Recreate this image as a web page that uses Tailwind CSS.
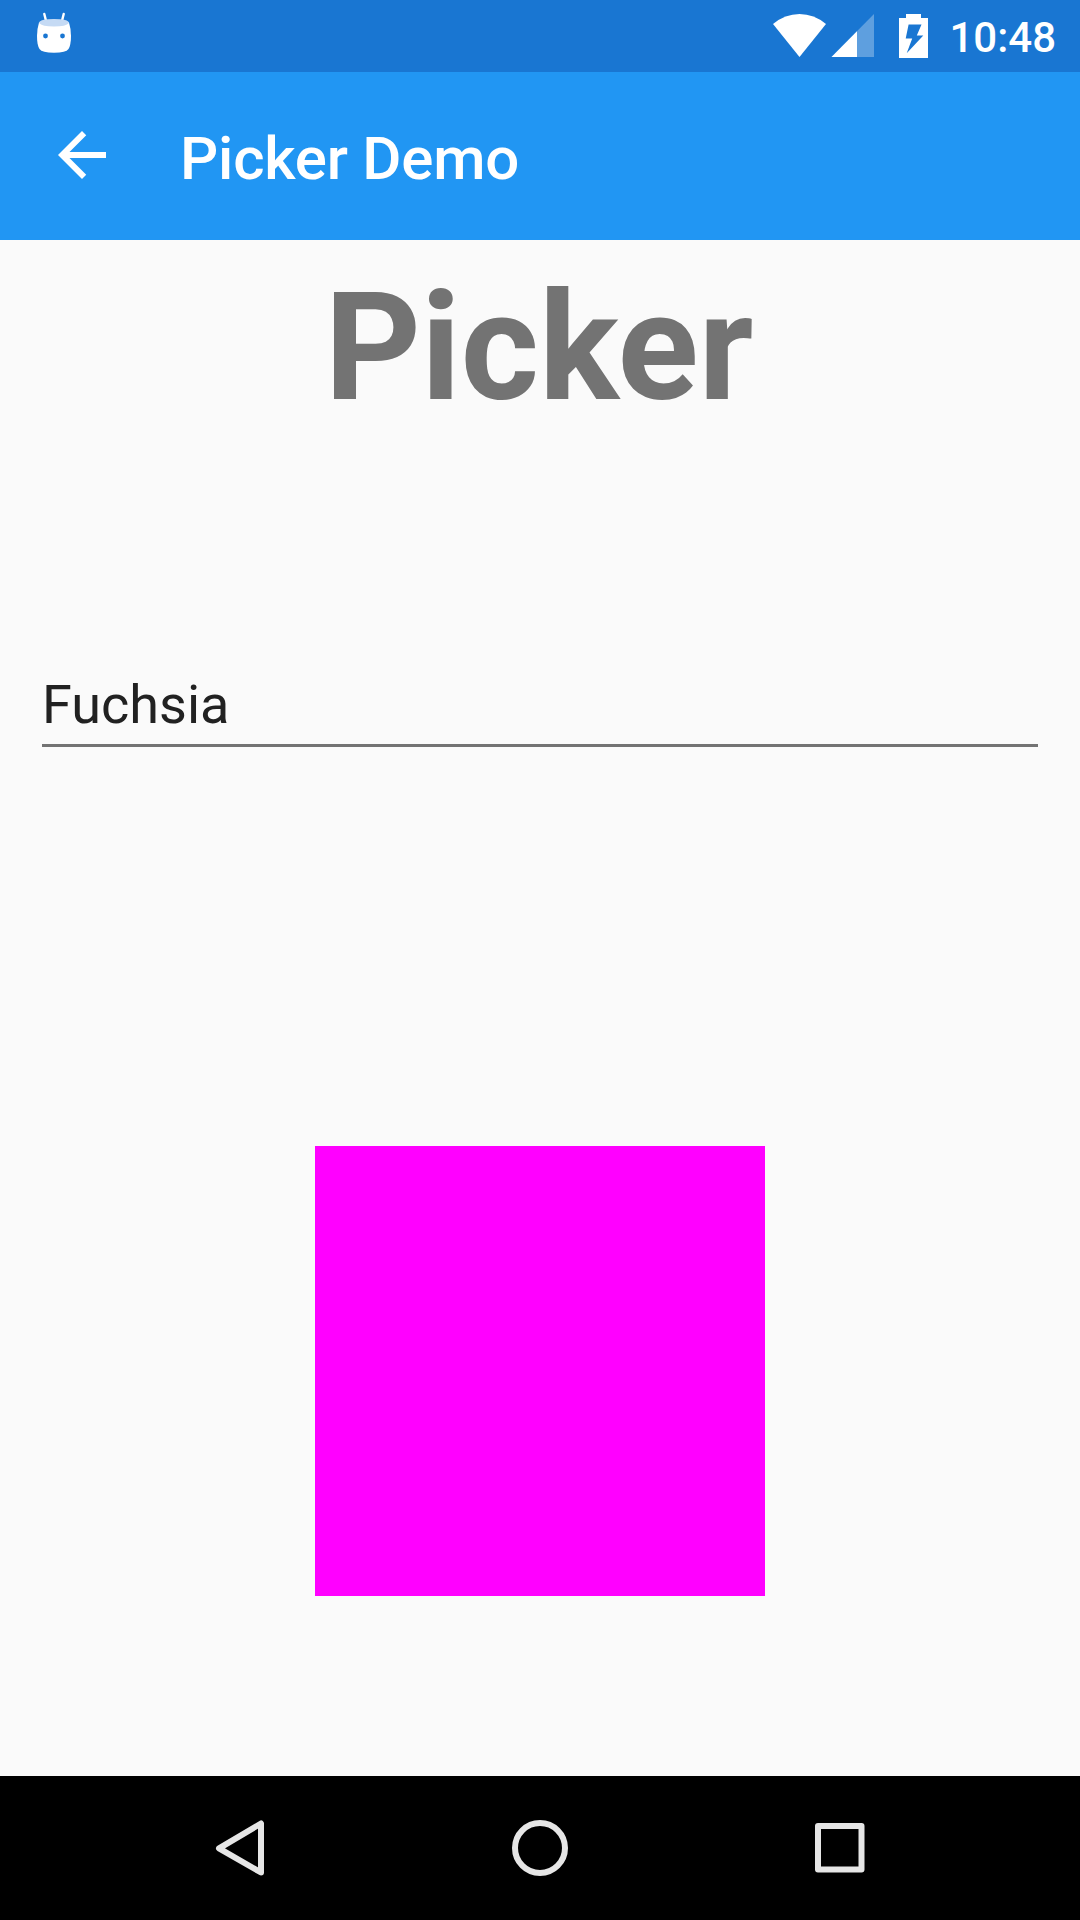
<!DOCTYPE html>
<html lang="en">
<head>
<meta charset="utf-8">
<title>Picker Demo</title>
<script src="https://cdn.jsdelivr.net/npm/@tailwindcss/browser@4"></script>
</head>
<body class="flex h-[1920px] w-[1080px] flex-col overflow-hidden bg-[#fafafa] font-['Roboto',sans-serif]">
  <div class="flex h-[72px] shrink-0 items-start justify-between bg-[#1976d2] text-white">
    <svg class="ml-[30px] h-[72px] w-12" viewBox="30 0 48 72" fill="none">
      <path d="M44.3 14l2 8M63.7 14l-2 8" stroke="#fff" stroke-width="2.4" stroke-linecap="round"/>
      <path d="M39 22.500Q54 17 69 22.500Q71 29 71 36Q71 45 68.500 49Q66 52.800 54 52.800Q42 52.800 39.500 49Q37 45 37 36Q37 29 39 22.500Z" fill="#fff"/>
      <path d="M39 23Q39.500 19 54 19Q68.500 19 69 23Q66 26.500 54 26.500Q42 26.500 39 23Z" fill="#c5daf4"/>
      <circle cx="45.500" cy="36" r="2.400" fill="#1976d2"/><circle cx="62.500" cy="36" r="2.400" fill="#1976d2"/>
    </svg>
    <div class="flex h-[72px] items-start pr-6">
      <svg class="h-[72px] w-[180px]" viewBox="769 0 180 72" fill="#fff">
        <path d="M773 24Q785 14 799.500 14T826 24L799.500 57Z"/>
        <path d="M831.500 57L874 14V57Z" fill-opacity=".3"/>
        <path d="M831.500 57L857 31.300V57Z"/>
        <path fill-rule="evenodd" d="M906 14H921V18H928V58H899V18H906ZM908.600 24.500L905.700 38.500H912.200L906.700 53.300L923.300 35.500H916.800L921.500 24.500Z"/>
      </svg>
      <span class="pt-px text-[42px] leading-[73px] font-medium">10:48</span>
    </div>
  </div>
  <header class="flex h-[168px] shrink-0 items-center bg-[#2196f3] text-white">
    <svg class="ml-[46px] mb-0.5 h-[72px] w-[72px]" viewBox="0 0 24 24" fill="#fff"><path d="M20 11H7.830l5.590-5.590L12 4l-8 8 8 8 1.410-1.410L7.830 13H20v-2z"/></svg>
    <h1 class="ml-[62px] pt-[5px] text-[60px] leading-[70px] font-medium tracking-[-0.22px]">Picker Demo</h1>
  </header>
  <main class="flex min-h-0 flex-1 flex-col">
    <h2 class="pt-5 pr-0.5 text-center text-[150px] leading-[176px] font-bold text-[#737373]">Picker</h2>
    <div class="mx-[42px] mt-[228px] flex h-[83px] items-start border-b-3 border-[#737373] text-[54px] leading-[81px] text-[#212121]">Fuchsia</div>
    <div class="mt-[399px] size-[450px] self-center bg-[#ff00ff]"></div>
  </main>
  <nav class="flex h-36 shrink-0 items-center justify-between bg-black px-[204px]">
    <svg class="h-[72px] w-[72px]" viewBox="204 1812 72 72" fill="none" stroke="#e6e6e6" stroke-width="6" stroke-linejoin="round"><path d="M261 1823.500V1872.500L219 1848.300Z"/></svg>
    <svg class="h-[72px] w-[72px]" viewBox="504 1812 72 72" fill="none" stroke="#e6e6e6" stroke-width="6"><circle cx="540" cy="1848" r="25"/></svg>
    <svg class="h-[72px] w-[72px]" viewBox="804 1812 72 72" fill="none" stroke="#e6e6e6" stroke-width="6" stroke-linejoin="round"><rect x="818" y="1826" width="43.500" height="43.500"/></svg>
  </nav>
</body>
</html>
